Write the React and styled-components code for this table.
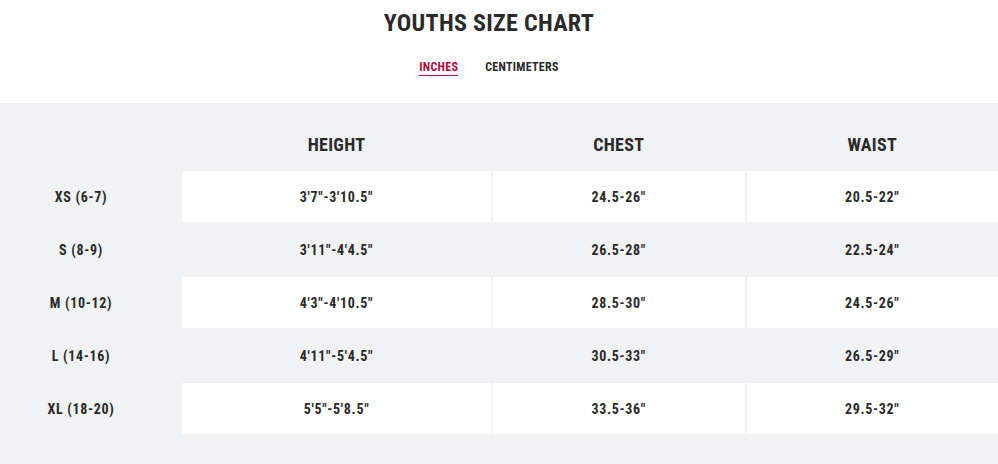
import React from "react";
import styled, { createGlobalStyle } from "styled-components";

const GlobalStyle = createGlobalStyle`
  html, body {
    margin: 0;
    padding: 0;
    background: #ffffff;
  }
  body {
    font-family: "Roboto Condensed", "DejaVu Sans Condensed", "DejaVu Sans", sans-serif;
    font-stretch: condensed;
    font-weight: bold;
    color: #2a2a2a;
  }
`;

const Wrapper = styled.div`
  width: 998px;
  height: 464px;
  overflow: hidden;
  display: flex;
  flex-direction: column;
`;

const Top = styled.div`
  height: 103px;
  box-sizing: border-box;
  padding-right: 20px;
  display: flex;
  flex-direction: column;
  align-items: center;
`;

const Title = styled.h1`
  margin: 8px 0 0;
  font-size: 24px;
  line-height: 30px;
  letter-spacing: 0.3px;
  text-transform: uppercase;
`;

const Tabs = styled.div`
  display: flex;
  gap: 27px;
  margin-top: 22px;
`;

const Tab = styled.span`
  font-size: 12px;
  line-height: 14px;
  letter-spacing: 0.3px;
  color: ${(props) => (props.active ? "#b5083a" : "#2a2a2a")};
  border-bottom: 1px solid
    ${(props) => (props.active ? "#b5083a" : "transparent")};
  padding-bottom: 1px;
  cursor: pointer;
`;

const Chart = styled.div`
  flex: 1;
  background: #f1f2f4;
  padding-top: 19px;
`;

const Row = styled.div`
  display: grid;
  grid-template-columns: 180px 309px 1fr 1fr;
  column-gap: 2px;
  height: ${(props) => (props.head ? "48px" : "53px")};
  padding: ${(props) => (props.head ? "0 0 4px" : "1px 0")};
  box-sizing: border-box;
`;

const HeadCell = styled.div`
  display: flex;
  align-items: center;
  justify-content: center;
  font-size: 18px;
  letter-spacing: 0.3px;
`;

const Label = styled.div`
  display: flex;
  align-items: center;
  justify-content: center;
  padding-right: 18px;
  font-size: 14px;
  letter-spacing: 0.7px;
`;

const Cell = styled.div`
  display: flex;
  align-items: center;
  justify-content: center;
  background: ${(props) => (props.white ? "#ffffff" : "transparent")};
  font-size: 14px;
  letter-spacing: 0.7px;
`;

const sizes = [
  { label: "XS (6-7)", height: "3'7\"-3'10.5\"", chest: "24.5-26\"", waist: "20.5-22\"" },
  { label: "S (8-9)", height: "3'11\"-4'4.5\"", chest: "26.5-28\"", waist: "22.5-24\"" },
  { label: "M (10-12)", height: "4'3\"-4'10.5\"", chest: "28.5-30\"", waist: "24.5-26\"" },
  { label: "L (14-16)", height: "4'11\"-5'4.5\"", chest: "30.5-33\"", waist: "26.5-29\"" },
  { label: "XL (18-20)", height: "5'5\"-5'8.5\"", chest: "33.5-36\"", waist: "29.5-32\"" },
];

export default function App() {
  return (
    <Wrapper>
      <GlobalStyle />
      <Top>
        <Title>Youths Size Chart</Title>
        <Tabs>
          <Tab active>INCHES</Tab>
          <Tab>CENTIMETERS</Tab>
        </Tabs>
      </Top>
      <Chart>
        <Row head>
          <HeadCell />
          <HeadCell>HEIGHT</HeadCell>
          <HeadCell>CHEST</HeadCell>
          <HeadCell>WAIST</HeadCell>
        </Row>
        {sizes.map((s, i) => {
          const white = i % 2 === 0;
          return (
            <Row key={s.label}>
              <Label>{s.label}</Label>
              <Cell white={white}>{s.height}</Cell>
              <Cell white={white}>{s.chest}</Cell>
              <Cell white={white}>{s.waist}</Cell>
            </Row>
          );
        })}
      </Chart>
    </Wrapper>
  );
}
